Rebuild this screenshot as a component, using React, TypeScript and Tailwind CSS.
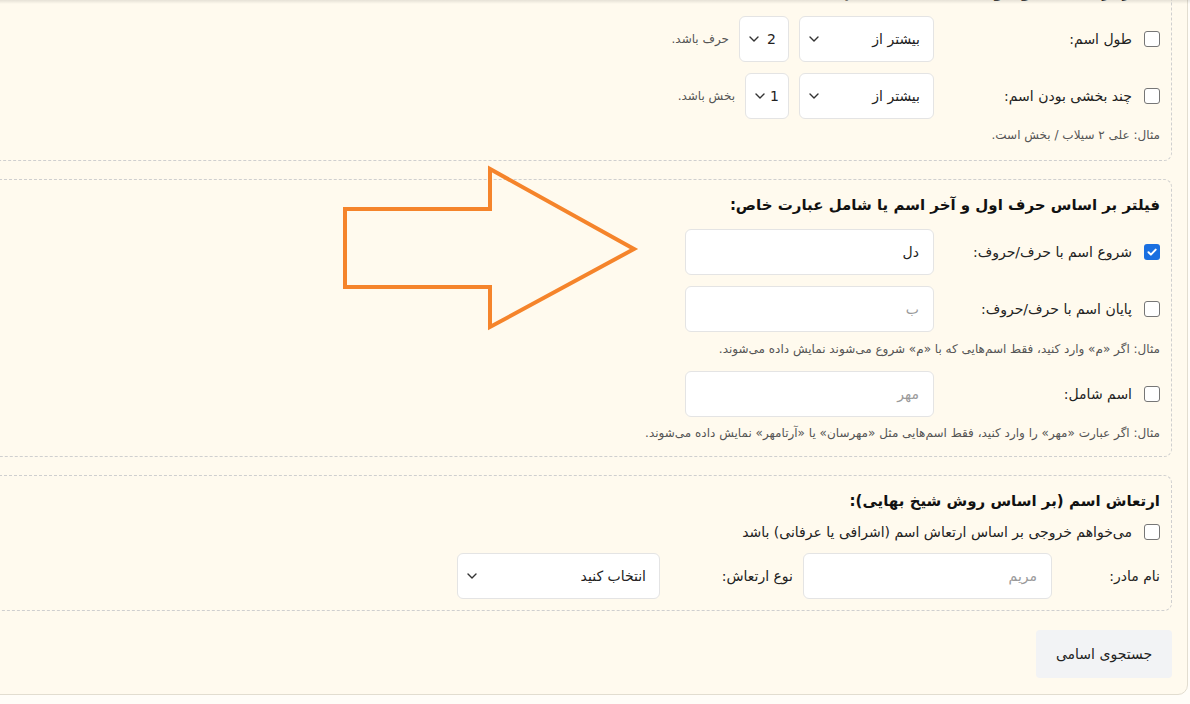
const FONT = { fontFamily: '"DejaVu Sans", "Noto Sans", sans-serif' };

function Check({ checked = false }: { checked?: boolean }) {
  if (checked) {
    return (
      <span className="flex h-[16px] w-[16px] shrink-0 items-center justify-center rounded-[3px] bg-[#1a6fe0]">
        <svg width="12" height="12" viewBox="0 0 12 12" fill="none">
          <path d="M2.5 6.2l2.4 2.4 4.8-5" stroke="white" strokeWidth="2" strokeLinecap="round" strokeLinejoin="round" />
        </svg>
      </span>
    );
  }
  return <span className="h-[16px] w-[16px] shrink-0 rounded-[3px] border border-[#767676] bg-white" />;
}

function Chevron() {
  return (
    <svg width="10" height="6" viewBox="0 0 10 6" fill="none">
      <path d="M1 1l4 4 4-4" stroke="#333" strokeWidth="1.4" strokeLinecap="round" strokeLinejoin="round" />
    </svg>
  );
}

function Select({ value, w, pr = "pr-[13px]" }: { value: string; w: string; pr?: string }) {
  return (
    <div className={`flex h-[46px] ${w} shrink-0 items-center justify-between rounded-[6px] border border-[#e4e4e4] bg-white pl-[9px] ${pr} text-[14px] text-[#222]`}>
      <span>{value}</span>
      <Chevron />
    </div>
  );
}

function Input({ value, placeholder, w = "w-[249px]" }: { value?: string; placeholder?: string; w?: string }) {
  return (
    <div className={`flex h-[46px] ${w} shrink-0 items-center rounded-[6px] border border-[#e4e4e4] bg-white px-[14px] text-[14px]`}>
      {value ? <span className="text-[#222]">{value}</span> : <span className="text-[#9a9a9a]">{placeholder}</span>}
    </div>
  );
}

function CheckLabel({ label, checked }: { label: string; checked?: boolean }) {
  return (
    <div className="flex w-[216px] shrink-0 items-center gap-[12px] text-[14px] text-[#222]">
      <Check checked={checked} />
      <span>{label}</span>
    </div>
  );
}

function Hint({ children, className = "" }: { children: React.ReactNode; className?: string }) {
  return <p className={`text-[12px] leading-[16px] text-[#555] ${className}`}>{children}</p>;
}

function Section({ title, children, className = "" }: { title: string; children: React.ReactNode; className?: string }) {
  return (
    <section className={`rounded-[8px] border border-dashed border-[#cfcfcf] pl-4 pr-[11px] pt-[14px] ${className}`}>
      <h2 className="mb-[13px] text-[15px] font-bold leading-[22px] text-[#111]">{title}</h2>
      {children}
    </section>
  );
}

export default function App() {
  return (
    <div dir="rtl" style={FONT} className="relative h-[704px] w-[1190px] overflow-hidden bg-[#fffdf8]">
      <div className="ml-[-30px] mr-[2px] mt-[-50px] rounded-[10px] border border-[#e2ddd0] bg-[#fffaee] pb-[16px] pl-[15px] pr-[15px] pt-[15px]">
        <div className="flex flex-col gap-[18px]">
          {/* length filter */}
          <Section title="فیلتر بر اساس طول و تعداد بخش‌های اسم:" className="pb-[17px]">
            <div className="flex flex-col gap-[11px]">
              <div className="flex items-center gap-[10px]">
                <CheckLabel label="طول اسم:" />
                <Select value="بیشتر از" w="w-[135px]" />
                <Select value="2" w="w-[50px]" pr="pr-[12px]" />
                <span className="text-[12px] text-[#555]">حرف باشد.</span>
              </div>
              <div className="flex items-center gap-[10px]">
                <CheckLabel label="چند بخشی بودن اسم:" />
                <Select value="بیشتر از" w="w-[135px]" />
                <Select value="1" w="w-[44px]" pr="pr-[9px]" />
                <span className="text-[12px] text-[#555]">بخش باشد.</span>
              </div>
            </div>
            <Hint className="mt-[8px]">مثال: علی ۲ سیلاب / بخش است.</Hint>
          </Section>

          {/* letters filter */}
          <Section title="فیلتر بر اساس حرف اول و آخر اسم یا شامل عبارت خاص:" className="pb-[15px]">
            <div className="flex flex-col gap-[11px]">
              <div className="flex items-center gap-[10px]">
                <CheckLabel label="شروع اسم با حرف/حروف:" checked />
                <Input value="دل" />
              </div>
              <div className="flex items-center gap-[10px]">
                <CheckLabel label="پایان اسم با حرف/حروف:" />
                <Input placeholder="ب" />
              </div>
            </div>
            <Hint className="mt-[9px]">مثال: اگر «م» وارد کنید، فقط اسم‌هایی که با «م» شروع می‌شوند نمایش داده می‌شوند.</Hint>
            <div className="mt-[14px] flex items-center gap-[10px]">
              <CheckLabel label="اسم شامل:" />
              <Input placeholder="مهر" />
            </div>
            <Hint className="mt-[8px]">مثال: اگر عبارت «مهر» را وارد کنید، فقط اسم‌هایی مثل «مهرسان» یا «آرتامهر» نمایش داده می‌شوند.</Hint>
          </Section>

          {/* vibration */}
          <Section title="ارتعاش اسم (بر اساس روش شیخ بهایی):" className="pb-[11px]">
            <div className="-mt-[3px] flex items-center gap-[12px] text-[14px] leading-[20px] text-[#222]">
              <Check />
              <span>می‌خواهم خروجی بر اساس ارتعاش اسم (اشرافی یا عرفانی) باشد</span>
            </div>
            <div className="mt-[11px] flex items-center gap-[10px] text-[14px] text-[#222]">
              <span className="w-[98px] shrink-0">نام مادر:</span>
              <Input placeholder="مریم" />
              <span className="w-[123px] shrink-0">نوع ارتعاش:</span>
              <Select value="انتخاب کنید" w="w-[203px]" />
            </div>
          </Section>
        </div>

        <button className="mt-[19px] h-[48px] w-[136px] rounded-[4px] bg-[#f2f3f5] text-[14px] text-[#222]">
          جستجوی اسامی
        </button>
      </div>

      {/* top shade */}
      <div className="absolute inset-x-0 top-0 h-[4px] bg-gradient-to-b from-black/10 to-transparent" />

      {/* annotation arrow */}
      <svg className="absolute left-[340px] top-[164px]" width="300" height="168" viewBox="0 0 300 168" fill="none">
        <polygon
          points="5,45 150,45 150,5 294,85 150,163 150,123 5,123"
          stroke="#f5842b"
          strokeWidth="4"
          strokeLinejoin="miter"
        />
      </svg>
    </div>
  );
}
